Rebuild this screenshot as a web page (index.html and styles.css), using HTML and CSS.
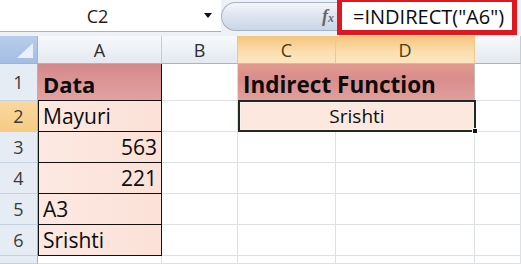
FILE: index.html
```html
<!DOCTYPE html>
<html>
<head>
<meta charset="utf-8">
<link rel="stylesheet" href="styles.css">
</head>
<body>
<div class="app">
  <div class="fbar">
    <div class="namebox"><span class="ref">C2</span><span class="arrow"></span></div>
    <div class="pill"><span class="fx">f<span class="sub">x</span></span></div>
    <div class="formula">=INDIRECT("A6")</div>
  </div>
  <div class="sheet">
    <div class="corner"><svg width="38" height="28" viewBox="0 0 38 28"><polygon points="33,7 33,22 17,22" fill="#e9f0f9"/></svg></div>
    <div class="colh">A</div>
    <div class="colh">B</div>
    <div class="colh sel">C</div>
    <div class="colh sel">D</div>
    <div class="colh"></div>

    <div class="rowh">1</div>
    <div class="cell a head">Data</div>
    <div class="cell"></div>
    <div class="cell head2 span2">Indirect Function</div>
    <div class="cell"></div>

    <div class="rowh sel">2</div>
    <div class="cell a">Mayuri</div>
    <div class="cell"></div>
    <div class="cell result span2">Srishti<span class="handle"></span></div>
    <div class="cell"></div>

    <div class="rowh">3</div>
    <div class="cell a num">563</div>
    <div class="cell"></div>
    <div class="cell"></div>
    <div class="cell"></div>
    <div class="cell"></div>

    <div class="rowh">4</div>
    <div class="cell a num">221</div>
    <div class="cell"></div>
    <div class="cell"></div>
    <div class="cell"></div>
    <div class="cell"></div>

    <div class="rowh">5</div>
    <div class="cell a">A3</div>
    <div class="cell"></div>
    <div class="cell"></div>
    <div class="cell"></div>
    <div class="cell"></div>

    <div class="rowh">6</div>
    <div class="cell a">Srishti</div>
    <div class="cell"></div>
    <div class="cell"></div>
    <div class="cell"></div>
    <div class="cell"></div>

    <div class="rowh last"></div>
    <div class="cell"></div>
    <div class="cell"></div>
    <div class="cell"></div>
    <div class="cell"></div>
    <div class="cell"></div>
  </div>
</div>
</body>
</html>
```

FILE: styles.css
```css
* { box-sizing: border-box; }
html, body { margin: 0; padding: 0; }
body {
  width: 521px;
  height: 264px;
  overflow: hidden;
  background: #ffffff;
  font-family: "Open Sans", "Liberation Sans", sans-serif;
  color: #0c0c0c;
}
.app { display: flex; flex-direction: column; width: 521px; height: 264px; overflow: hidden; }

.fbar {
  display: flex;
  align-items: flex-start;
  height: 36px;
  flex: none;
  background: #eef1f5;
}
.namebox {
  display: flex;
  align-items: center;
  width: 221px;
  height: 32px;
  background: #fff;
  border-bottom: 1px solid #a9b1bb;
}
.ref {
  width: 195px;
  text-align: center;
  font-size: 18px;
  color: #1c1c1c;
}
.arrow {
  margin-left: 9px;
  width: 0; height: 0;
  border-left: 4px solid transparent;
  border-right: 4px solid transparent;
  border-top: 5px solid #111;
}
.pill {
  display: flex;
  align-items: center;
  justify-content: flex-end;
  width: 116px;
  height: 29px;
  margin-top: 2px;
  border: 1px solid #a4b2c6;
  border-right: none;
  border-radius: 15px 0 0 15px;
  background: linear-gradient(#f3f6fb 0%, #dfe6f1 45%, #c9d5e7 100%);
  padding-right: 3px;
}
.fx {
  font-family: "Liberation Serif", serif;
  font-style: italic;
  font-weight: bold;
  font-size: 18px;
  color: #64686f;
}
.fx .sub { font-size: 12px; }
.formula {
  width: 180px;
  height: 35px;
  margin-right: 4px;
  border: 5px solid #e2161f;
  border-top-width: 2px;
  background: #fff;
  display: flex;
  align-items: center;
  padding-left: 11px;
  padding-top: 1px;
  font-size: 20px;
  color: #0c0c0c;
  white-space: nowrap;
}

.sheet {
  flex: 1;
  min-height: 0;
  display: grid;
  grid-template-columns: 38px 124px 76px 98px 139px 1fr;
  grid-template-rows: 28px 37px 31px 31px 31px 31px 31px 8px;
}
.corner {
  background: linear-gradient(#b7cdea, #a3bde3);
  border-right: 1px solid #9eb3cf;
  border-bottom: 1px solid #9eb3cf;
}
.corner svg { display: block; }
.colh {
  display: flex;
  align-items: center;
  justify-content: center;
  font-size: 18px;
  color: #2d2d2d;
  background: linear-gradient(#f7f9fb, #e4e9ef);
  border-right: 1px solid #c4ccd6;
  border-bottom: 1px solid #9eb6ce;
}
.colh.sel {
  background: linear-gradient(#f5c47c, #fbdfb0 60%, #fce6c0);
  color: #4b3d12;
  border-right-color: #f0c88a;
  border-bottom-color: #f0b860;
}
.rowh {
  display: flex;
  align-items: center;
  justify-content: center;
  font-size: 18px;
  color: #3a3a3a;
  background: #e6ecf4;
  border-right: 1px solid #9eb6ce;
  border-bottom: 1px solid #c5d2e2;
}
.rowh.sel { background: linear-gradient(#f9d8a0, #f7cb84); }

.cell {
  display: flex;
  align-items: center;
  padding: 0 5px;
  font-size: 21px;
  white-space: nowrap;
  border-right: 1px solid #dde0e4;
  border-bottom: 1px solid #dde0e4;
}
.span2 { grid-column: span 2; }
.cell.a {
  background: linear-gradient(90deg, #fde9e2, #fbe1d8);
  border-right: 1px solid #111;
  border-bottom: 1px solid #111;
  box-shadow: inset 1px 0 0 #111;
}
.cell.a.head {
  background: linear-gradient(#d4898a, #e2a2a1);
  font-weight: bold;
  font-size: 22px;
  padding-top: 3px;
  box-shadow: none;
}
.cell.num { justify-content: flex-end; padding-right: 4px; }
.cell.head2 {
  background: linear-gradient(#e29a8e, #d98d8c 40%, #e0a09f);
  font-weight: bold;
  font-size: 22.5px;
  padding-top: 3px;
  border-right-color: #c9b8b8;
  border-bottom: none;
}
.cell.result {
  position: relative;
  justify-content: center;
  font-size: 19px;
  background: #fde8e0;
  border: 2px solid #202a20;
  margin-top: -1px;
  margin-right: -1px;
  box-shadow: inset 0 0 0 1px #f8f1ee;
}
.handle {
  position: absolute;
  right: -4px;
  bottom: -4px;
  width: 6px;
  height: 6px;
  background: #111;
  border: 1px solid #fff;
}
```
